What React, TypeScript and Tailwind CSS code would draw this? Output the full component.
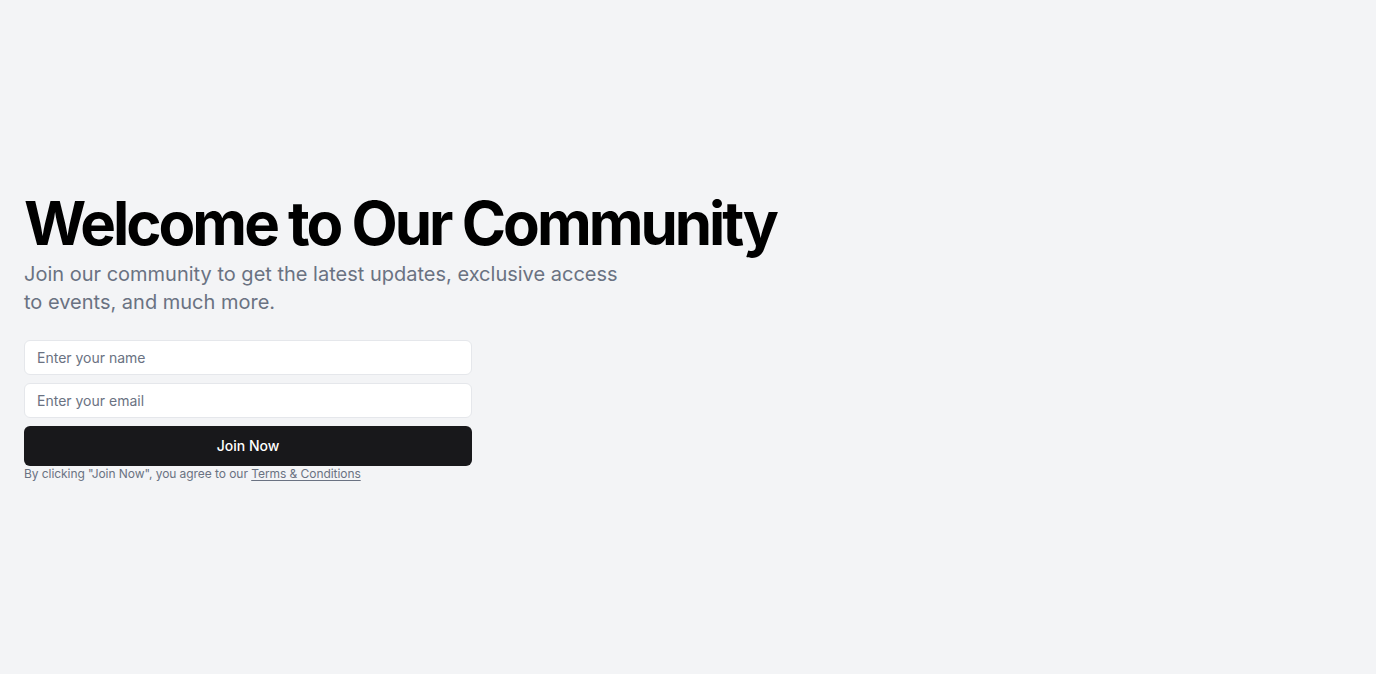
import React from "react";

const App = () => {
  return (
    <section
      className="flex min-h-screen w-full items-center bg-gray-100 px-6"
      style={{ fontFamily: "Inter, 'Noto Sans', sans-serif" }}
    >
      <div className="flex w-full flex-col items-start">
        <h1 className="text-6xl font-bold leading-none tracking-tighter text-black">
          Welcome to Our Community
        </h1>
        <p className="mt-[7px] max-w-[600px] text-xl leading-7 text-gray-500">
          Join our community to get the latest updates, exclusive access to events, and much more.
        </p>
        <div className="mt-6 w-full max-w-md">
          <form className="flex flex-col gap-2" onSubmit={(e) => e.preventDefault()}>
            <input
              type="text"
              placeholder="Enter your name"
              className="h-[35px] w-full rounded-md border border-gray-200 bg-white px-3 text-sm text-gray-900 placeholder:text-gray-500 focus:outline-none"
            />
            <input
              type="email"
              placeholder="Enter your email"
              className="h-[35px] w-full rounded-md border border-gray-200 bg-white px-3 text-sm text-gray-900 placeholder:text-gray-500 focus:outline-none"
            />
            <button
              type="submit"
              className="h-10 w-full rounded-md bg-zinc-900 text-sm font-medium text-white"
            >
              Join Now
            </button>
          </form>
          <p className="text-xs tracking-[-0.005em] text-gray-500">
            By clicking "Join Now", you agree to our{" "}
            <a href="#" className="underline underline-offset-2">
              Terms &amp; Conditions
            </a>
          </p>
        </div>
      </div>
    </section>
  );
};

export default App;
